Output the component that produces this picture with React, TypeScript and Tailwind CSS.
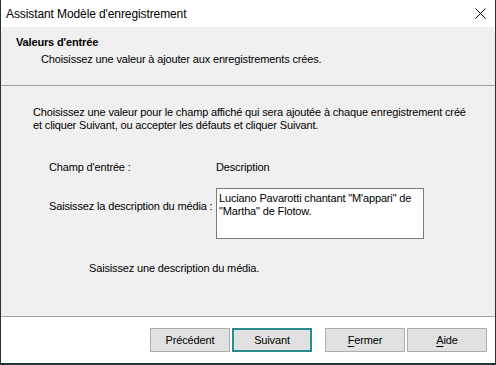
import React from 'react';

const font = "font-['Liberation_Sans',Arial,sans-serif] text-[11px] tracking-[-0.15px] text-black";

const WizardButton = ({
  label,
  hotkey,
  focused,
  className = '',
}: {
  label: string;
  hotkey?: boolean;
  focused?: boolean;
  className?: string;
}) => (
  <button
    className={`h-[24px] w-[80px] bg-[#e1e1e1] flex items-center justify-center ${
      focused ? 'border-2 border-[#2b8c8c]' : 'border border-[#adadad]'
    } ${className}`}
  >
    {hotkey ? (
      <span>
        <span className="underline underline-offset-2">{label[0]}</span>
        {label.slice(1)}
      </span>
    ) : (
      label
    )}
  </button>
);

export default function App() {
  return (
    <div className={`w-[496px] h-[365px] bg-[#233539] ${font}`}>
      <div className="w-[494px] h-[363px] ml-[1px] flex flex-col bg-[#f0f0f0]">
        {/* title bar */}
        <div className="h-[27px] bg-white flex items-center justify-between pl-[5px] pr-[9px]">
          <span className="text-[12px] leading-none tracking-[-0.1px]">Assistant Modèle d'enregistrement</span>
          <svg width="11" height="11" viewBox="0 0 11 11" className="mb-[1px]">
            <path d="M0.5 0.5 L10.5 10.5 M10.5 0.5 L0.5 10.5" stroke="#000" strokeWidth="1" />
          </svg>
        </div>

        {/* header */}
        <div className="h-[59px] border-b border-[#a0a0a0] pt-[7px]">
          <div className="pl-[15px] font-bold leading-[16px]">Valeurs d'entrée</div>
          <div className="pl-[40px] mt-[1px] leading-[16px]">
            Choisissez une valeur à ajouter aux enregistrements crées.
          </div>
        </div>

        {/* body */}
        <div className="flex-1 flex flex-col pt-[20px]">
          <p className="pl-[32px] leading-[13px]">
            Choisissez une valeur pour le champ affiché qui sera ajoutée à chaque enregistrement créé
            <br />
            et cliquer Suivant, ou accepter les défauts et cliquer Suivant.
          </p>

          <div className="grid grid-cols-[167px_1fr] pl-[48px] mt-[29px] leading-[13px]">
            <span>Champ d'entrée :</span>
            <span>Description</span>
          </div>

          <div className="grid grid-cols-[167px_1fr] pl-[48px] mt-[14px] items-start">
            <span className="mt-[12px] leading-[13px] whitespace-nowrap">
              Saisissez la description du média :
            </span>
            <div className="w-[208px] h-[51px] bg-white border border-[#7a7a7a] px-[2px] pt-[3px] leading-[13px]">
              Luciano Pavarotti chantant "M'appari" de "Martha" de Flotow.
            </div>
          </div>

          <div className="pl-[88px] mt-[23px] leading-[13px]">Saisissez une description du média.</div>
        </div>

        {/* footer */}
        <div className="h-[47px] bg-white border-t border-[#a0a0a0] flex pt-[11px] pl-[149px]">
          <WizardButton label="Précédent" />
          <WizardButton label="Suivant" focused className="ml-[2px]" />
          <WizardButton label="Fermer" hotkey className="ml-[13px]" />
          <WizardButton label="Aide" hotkey className="ml-[2px]" />
        </div>
      </div>
    </div>
  );
}
